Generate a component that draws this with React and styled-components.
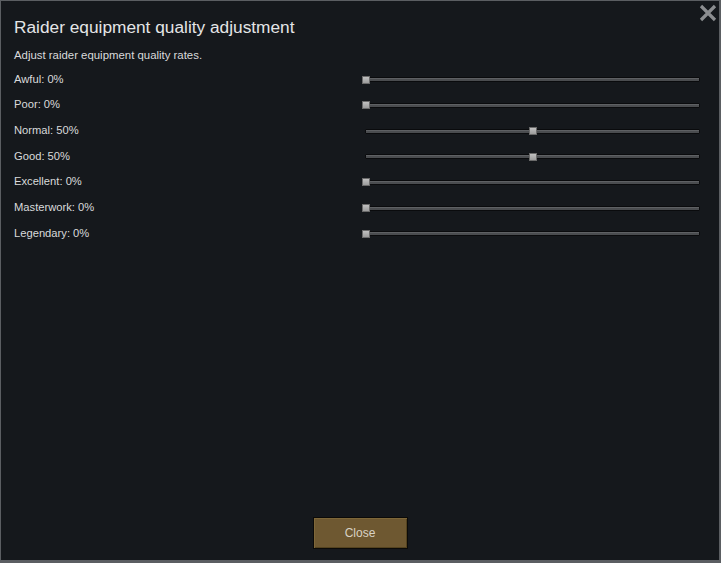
import React from "react";
import styled, { createGlobalStyle } from "styled-components";

const GlobalStyle = createGlobalStyle`
  html, body {
    margin: 0;
    padding: 0;
    background: #15181c;
  }
  * {
    box-sizing: border-box;
  }
`;

const qualities = [
  { name: "Awful", value: 0 },
  { name: "Poor", value: 0 },
  { name: "Normal", value: 50 },
  { name: "Good", value: 50 },
  { name: "Excellent", value: 0 },
  { name: "Masterwork", value: 0 },
  { name: "Legendary", value: 0 },
];

const Window = styled.div`
  position: relative;
  width: 721px;
  height: 563px;
  display: flex;
  flex-direction: column;
  background: #15181c;
  border-style: solid;
  border-color: #5b5e62;
  border-width: 1px 2px 3px 1px;
  padding: 14px 0 11px 13px;
  font-family: "Liberation Sans", Arial, sans-serif;
  color: #dedfe0;
`;

const CloseX = styled.button`
  position: absolute;
  top: 3px;
  right: 2px;
  width: 18px;
  height: 18px;
  padding: 0;
  border: none;
  background: transparent;
  cursor: pointer;
`;

const Title = styled.h1`
  margin: 0;
  font-size: 17.3px;
  font-weight: normal;
  line-height: 24px;
  color: #e4e5e6;
`;

const Description = styled.p`
  margin: 6px 0 0;
  font-size: 11.4px;
  line-height: 20px;
  color: #d9dadb;
`;

const List = styled.div`
  display: flex;
  flex-direction: column;
  margin-top: 1px;
`;

const Row = styled.div`
  display: flex;
  align-items: center;
  height: 25.67px;
  padding-right: 19px;
`;

const Label = styled.span`
  width: 347px;
  font-size: 11.2px;
  color: #d9dadb;
`;

const SliderBox = styled.div`
  flex: 1;
  height: 10px;
  display: flex;
  align-items: center;
  padding-left: 4px;
  margin-top: 2px;
`;

const Track = styled.div`
  position: relative;
  flex: 1;
  height: 5px;
  background: #4a4c4f;
  border: 1px solid #0a0b0d;
  border-radius: 1px;
  box-shadow: inset 0 1px 0 #5e6063;
`;

const Thumb = styled.div`
  position: absolute;
  top: 50%;
  width: 8px;
  height: 8px;
  transform: translate(-50%, -50%);
  background: linear-gradient(#c0c0c0, #9c9c9c);
  border: 1px solid #6a6a6a;
`;

const Footer = styled.div`
  margin-top: auto;
  display: flex;
  justify-content: center;
  padding-right: 13px;
`;

const Button = styled.button`
  width: 95px;
  height: 32px;
  border: 1px solid #0b0a08;
  background: #6e5831;
  box-shadow: inset 1px 1px 0 #7e6739, inset -1px -1px 0 #54431f;
  color: #d9d2c4;
  font-family: "Liberation Sans", Arial, sans-serif;
  font-size: 12px;
  cursor: pointer;
`;

function QualitySlider({ value }) {
  return (
    <SliderBox>
      <Track>
        <Thumb style={{ left: `${value}%` }} />
      </Track>
    </SliderBox>
  );
}

export default function App() {
  return (
    <>
      <GlobalStyle />
      <Window>
        <CloseX aria-label="Close">
          <svg width="18" height="18" viewBox="0 0 18 18">
            <path
              d="M2 2 L16 16 M16 2 L2 16"
              stroke="#8b8d90"
              strokeWidth="3.2"
              fill="none"
            />
          </svg>
        </CloseX>
        <Title>Raider equipment quality adjustment</Title>
        <Description>Adjust raider equipment quality rates.</Description>
        <List>
          {qualities.map((q) => (
            <Row key={q.name}>
              <Label>
                {q.name}: {q.value}%
              </Label>
              <QualitySlider value={q.value} />
            </Row>
          ))}
        </List>
        <Footer>
          <Button>Close</Button>
        </Footer>
      </Window>
    </>
  );
}
